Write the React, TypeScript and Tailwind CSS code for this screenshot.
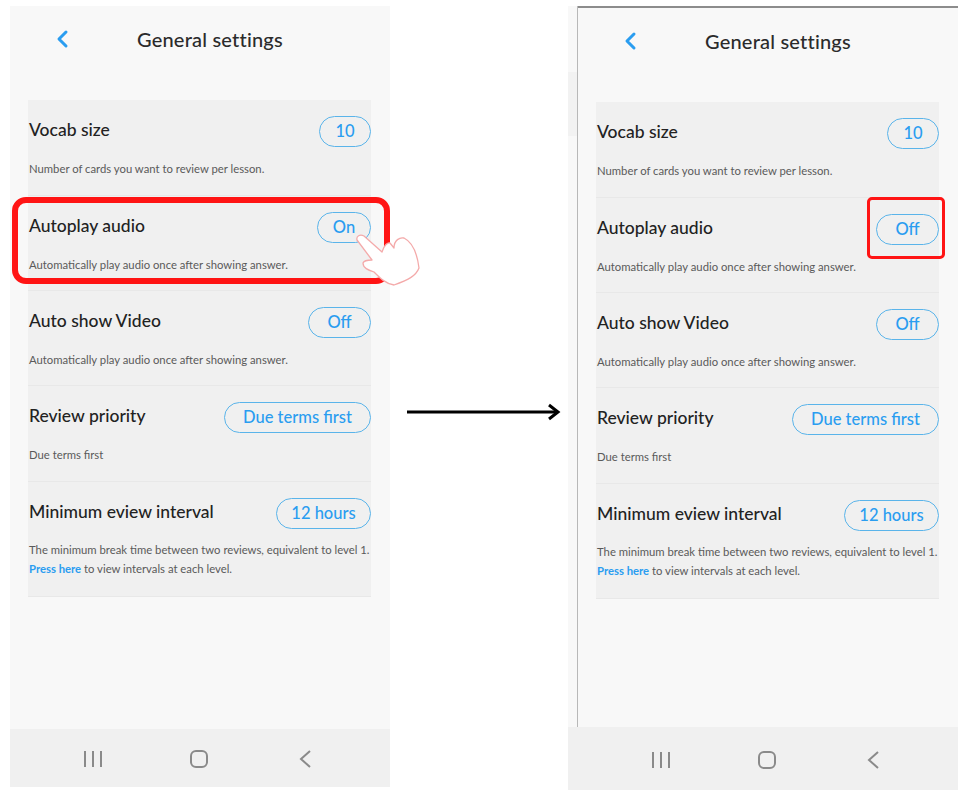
import React from "react";

const font = { fontFamily: '"Lato", "Noto Sans", sans-serif' };

function Row({ title, pill, pillW, children, h, descMt = "mt-[12px]" }: { title: string; pill: string; pillW: string; children: React.ReactNode; h: string; descMt?: string }) {
  return (
    <div className={`${h} pt-4 border-b border-[#e8e8e8]`}>
      <div className="flex h-[31px] items-center justify-between">
        <span className="pb-[4px] pl-px text-[17.5px] leading-none font-medium text-[#222]">{title}</span>
        <span className={`${pillW} flex h-[31px] items-center justify-center rounded-full border-[1.5px] border-[#5ab4ea] text-[16.5px] font-medium leading-none text-[#2a9df0]`}>{pill}</span>
      </div>
      <p className={`${descMt} pl-px text-[11.3px] leading-[19px] text-[#5a5a5a]`}>{children}</p>
    </div>
  );
}

function NavIcons() {
  return (
    <>
      <svg width="20" height="20" viewBox="0 0 20 20" fill="none" stroke="#8a8a8a" strokeWidth="2">
        <path d="M2 2V18M10 2V18M18 2V18" />
      </svg>
      <svg className="ml-[86px]" width="20" height="20" viewBox="0 0 20 20" fill="none" stroke="#8a8a8a" strokeWidth="2">
        <rect x="2" y="2" width="16" height="16" rx="5" />
      </svg>
      <svg className="ml-[89px]" width="14" height="20" viewBox="0 0 14 20" fill="none" stroke="#8a8a8a" strokeWidth="2">
        <path d="M12 2 L3 10 L12 18" />
      </svg>
    </>
  );
}

function Phone({ autoplay, right }: { autoplay: string; right?: boolean }) {
  return (
    <div className={`flex w-[380px] flex-none flex-col bg-[#f8f8f8] ${right ? "h-[784px] border-t-2 border-[#8c8c8c]" : "h-[781px]"}`}>
      <div className="flex h-[94px] flex-none items-center pb-[28px]">
        <svg className="ml-[44px]" width="16" height="20" viewBox="0 0 16 20" fill="none">
          <path d="M12 3 L5 10 L12 17" stroke="#2a9df0" strokeWidth="3" strokeLinecap="round" strokeLinejoin="round" />
        </svg>
        <span className="ml-[67px] text-[20px] font-medium leading-none text-[#2b2b2b] tracking-[0.2px]">General settings</span>
      </div>
      <div className="ml-[18px] w-[343px] flex-none bg-[#f0f0f0]">
        <Row h="h-[96px]" title="Vocab size" pill="10" pillW="w-[52px]">Number of cards you want to review per lesson.</Row>
        <Row h="h-[95px]" title="Autoplay audio" pill={autoplay} pillW={right ? "w-[63px]" : "w-[54px]"}>Automatically play audio once after showing answer.</Row>
        <Row h="h-[95px]" title="Auto show Video" pill="Off" pillW="w-[63px]">Automatically play audio once after showing answer.</Row>
        <Row h="h-[96px]" title="Review priority" pill="Due terms first" pillW="w-[147px]">Due terms first</Row>
        <Row h="h-[115px]" descMt="mt-[11px]" title="Minimum eview interval" pill="12 hours" pillW="w-[95px]">
          The minimum break time between two reviews, equivalent to level 1.
          <br />
          <span className="font-bold text-[#2a9df0]">Press here</span> to view intervals at each level.
        </Row>
      </div>
      <div className="flex-1" />
      <div className={`flex flex-none items-center bg-[#f0f0f0] pl-[73px] pt-[2px] ${right ? "h-[63px]" : "h-[58px]"}`}>
        <NavIcons />
      </div>
    </div>
  );
}

export default function App() {
  return (
    <div className="relative flex h-[801px] w-[975px] items-start overflow-hidden bg-white pl-[10px] pt-[6px]" style={font}>
      <Phone autoplay="On" />
      <div className="flex w-[178px] flex-none justify-center pt-[396px] pl-[8px]">
        <svg width="156" height="20" viewBox="0 0 156 20" fill="none" stroke="#000">
          <path d="M2 10H152" strokeWidth="3" />
          <path d="M144 3L153 10L144 17" strokeWidth="3" />
        </svg>
      </div>
      <div className="flex h-[784px] w-[10px] flex-none flex-col bg-[#f8f8f8]">
        <div className="flex-1 border-r border-[#b8b8b8] pt-[66px]">
          <div className="h-[64px] bg-[#f2f2f2]" />
        </div>
        <div className="h-[63px] bg-[#f0f0f0]" />
      </div>
      <Phone autoplay="Off" right />

      <div className="absolute left-[12px] top-[197px] h-[87px] w-[378px] rounded-[14px] border-[6px] border-[#ff1414]" />
      <svg className="absolute left-[300px] top-[190px]" width="130" height="110" viewBox="0 0 130 110" fill="#fff" stroke="#f4aaaa" strokeWidth="1.3" strokeLinejoin="round">
        <path d="M57 50 C56 46 60 44 64 46 L82 62 C84 55 88 52 90 53 L94 58 C94 50 100 47 104 48 C112 52 117 62 119 78 C116 86 108 90 94 95 C86 94 80 88 74 82 C68 80 63 78 63 73 C64 70 68 70 72 70 Z" />
      </svg>
      <div className="absolute left-[867px] top-[197px] h-[62px] w-[78px] rounded-[5px] border-[3px] border-[#ff1414]" />
    </div>
  );
}
